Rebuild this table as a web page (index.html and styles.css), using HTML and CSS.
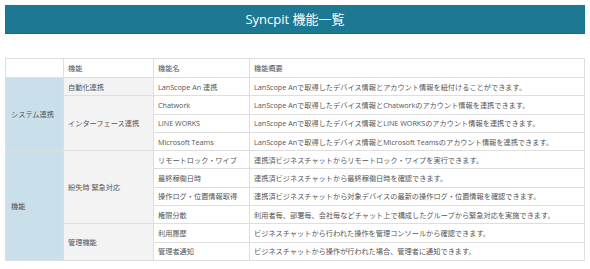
FILE: index.html
```html
<!DOCTYPE html>
<html lang="ja">
<head>
    <meta charset="UTF-8">
    <meta name="viewport" content="width=device-width, initial-scale=1.0">
    <title>Syncpit 機能一覧</title>
    <link rel="stylesheet" href="styles.css">
</head>
<body>
    <header class="page-title">
        <h1>Syncpit 機能一覧</h1>
    </header>

    <table class="feature-table">
        <colgroup>
            <col class="col-group">
            <col class="col-category">
            <col class="col-name">
            <col class="col-summary">
        </colgroup>
        <thead>
            <tr>
                <th class="blank"></th>
                <th>機能</th>
                <th>機能名</th>
                <th>機能概要</th>
            </tr>
        </thead>
        <tbody>
            <tr>
                <td class="group" rowspan="4">システム連携</td>
                <td class="category">自動化連携</td>
                <td>LanScope An 連携</td>
                <td>LanScope Anで取得したデバイス情報とアカウント情報を紐付けることができます。</td>
            </tr>
            <tr>
                <td class="category" rowspan="3">インターフェース連携</td>
                <td>Chatwork</td>
                <td>LanScope Anで取得したデバイス情報とChatworkのアカウント情報を連携できます。</td>
            </tr>
            <tr>
                <td>LINE WORKS</td>
                <td>LanScope Anで取得したデバイス情報とLINE WORKSのアカウント情報を連携できます。</td>
            </tr>
            <tr>
                <td>Microsoft Teams</td>
                <td>LanScope Anで取得したデバイス情報とMicrosoft Teamsのアカウント情報を連携できます。</td>
            </tr>
            <tr>
                <td class="group" rowspan="6">機能</td>
                <td class="category" rowspan="4">紛失時 緊急対応</td>
                <td>リモートロック・ワイプ</td>
                <td>連携済ビジネスチャットからリモートロック・ワイプを実行できます。</td>
            </tr>
            <tr>
                <td>最終稼働日時</td>
                <td>連携済ビジネスチャットから最終稼働日時を確認できます。</td>
            </tr>
            <tr>
                <td>操作ログ・位置情報取得</td>
                <td>連携済ビジネスチャットから対象デバイスの最新の操作ログ・位置情報を確認できます。</td>
            </tr>
            <tr>
                <td>権限分散</td>
                <td>利用者毎、部署毎、会社毎などチャット上で構成したグループから緊急対応を実施できます。</td>
            </tr>
            <tr>
                <td class="category" rowspan="2">管理機能</td>
                <td>利用履歴</td>
                <td>ビジネスチャットから行われた操作を管理コンソールから確認できます。</td>
            </tr>
            <tr>
                <td>管理者通知</td>
                <td>ビジネスチャットから操作が行われた場合、管理者に通知できます。</td>
            </tr>
        </tbody>
    </table>
</body>
</html>
```

FILE: styles.css
```css
* {
    margin: 0;
    padding: 0;
    box-sizing: border-box;
}

body {
    font-family: "Open Sans", "Noto Sans CJK JP", sans-serif;
    color: #555;
    background: #fff;
    padding: 5px;
}

/* Title bar */
.page-title {
    background: #1d7893;
    border-bottom: 1px solid #17697f;
    height: 29px;
    display: flex;
    align-items: center;
    justify-content: center;
}

.page-title h1 {
    font-size: 13px;
    font-weight: 400;
    color: #fff;
    line-height: 1;
}

/* Feature table */
.feature-table {
    width: 580px;
    margin-top: 24px;
    border-collapse: collapse;
    table-layout: fixed;
    font-size: 7.2px;
}

.col-group { width: 58px; }
.col-category { width: 90px; }
.col-name { width: 96px; }

.feature-table th,
.feature-table td {
    border: 1px solid #dedede;
    padding: 0 4px;
    text-align: left;
    vertical-align: middle;
    font-weight: 400;
    white-space: nowrap;
}

.feature-table thead tr { height: 19px; }
.feature-table tbody tr { height: 18.3px; }

.feature-table .group {
    background: #c9dfe9;
    padding-left: 5px;
}

.feature-table .category {
    background: #f3f3f3;
}
```
